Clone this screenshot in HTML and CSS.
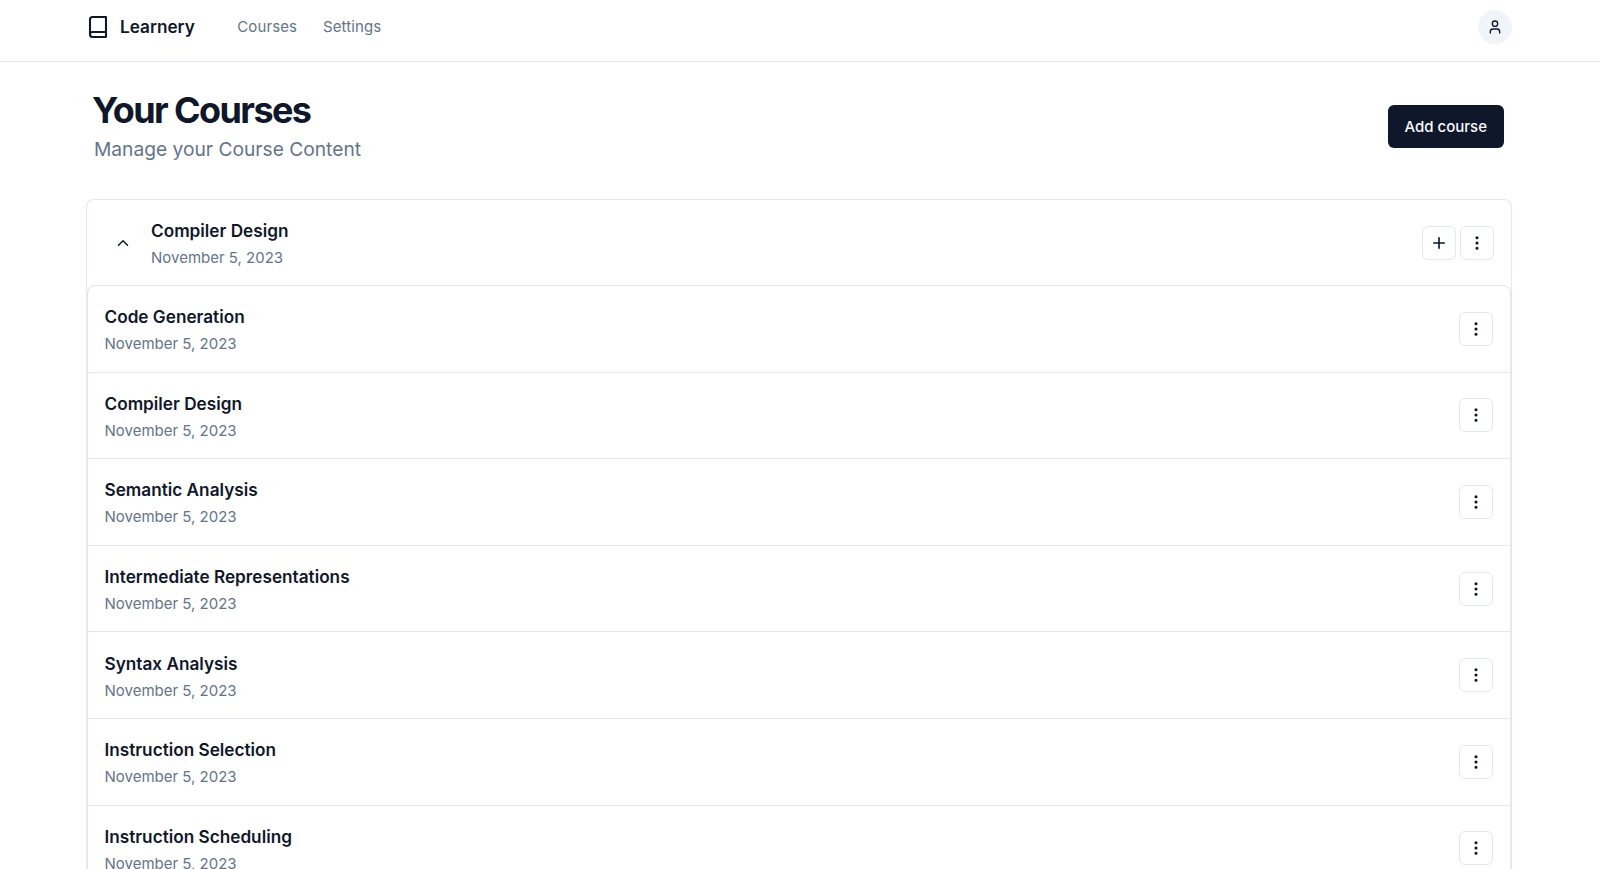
FILE: index.html
```html
<!DOCTYPE html>
<html lang="en">
<head>
<meta charset="UTF-8">
<meta name="viewport" content="width=device-width, initial-scale=1.0">
<title>Learnery</title>
<link rel="stylesheet" href="styles.css">
</head>
<body>
<header class="navbar">
    <div class="navbar-inner">
        <a class="brand" href="#">
            <svg class="brand-icon" viewBox="0 0 24 24" fill="none" stroke="currentColor" stroke-width="2" stroke-linecap="round" stroke-linejoin="round"><path d="M4 19.5v-15A2.5 2.5 0 0 1 6.500 2H20v20H6.500a2.500 2.500 0 0 1 0-5H20"/></svg>
            <span>Learnery</span>
        </a>
        <nav class="nav-links">
            <a href="#">Courses</a>
            <a href="#">Settings</a>
        </nav>
        <button class="avatar" type="button">
            <svg viewBox="0 0 24 24" fill="none" stroke="currentColor" stroke-width="2" stroke-linecap="round" stroke-linejoin="round"><path d="M19 21v-2a4 4 0 0 0-4-4H9a4 4 0 0 0-4 4v2"/><circle cx="12" cy="7" r="4"/></svg>
        </button>
    </div>
</header>

<main class="container">
    <div class="page-head">
        <div>
            <h1>Your Courses</h1>
            <p class="subtitle">Manage your Course Content</p>
        </div>
        <button class="add-btn" type="button">Add course</button>
    </div>

    <section class="course-card">
        <div class="course-head">
            <svg class="chevron" viewBox="0 0 24 24" fill="none" stroke="currentColor" stroke-width="2" stroke-linecap="round" stroke-linejoin="round"><path d="m18 15-6-6-6 6"/></svg>
            <div class="item-text">
                <div class="item-title">Compiler Design</div>
                <div class="item-date">November 5, 2023</div>
            </div>
            <div class="course-actions">
                <button class="icon-btn" type="button">
                    <svg viewBox="0 0 24 24" fill="none" stroke="currentColor" stroke-width="2" stroke-linecap="round" stroke-linejoin="round"><path d="M5 12h14"/><path d="M12 5v14"/></svg>
                </button>
                <button class="icon-btn" type="button">
                    <svg viewBox="0 0 24 24" fill="none" stroke="currentColor" stroke-width="2" stroke-linecap="round" stroke-linejoin="round"><circle cx="12" cy="12" r="1"/><circle cx="12" cy="5" r="1"/><circle cx="12" cy="19" r="1"/></svg>
                </button>
            </div>
        </div>
        <ul class="lesson-list" id="lesson-list"></ul>
    </section>
</main>

<script>
    const lessons = ['Code Generation', 'Compiler Design', 'Semantic Analysis', 'Intermediate Representations', 'Syntax Analysis', 'Instruction Selection', 'Instruction Scheduling'];
    const list = document.getElementById('lesson-list');
    lessons.forEach(name => {
        const row = document.createElement('li');
        row.className = 'lesson-row';
        row.innerHTML = `
            <div class="item-text">
                <div class="item-title">${name}</div>
                <div class="item-date">November 5, 2023</div>
            </div>
            <button class="icon-btn" type="button">
                <svg viewBox="0 0 24 24" fill="none" stroke="currentColor" stroke-width="2" stroke-linecap="round" stroke-linejoin="round"><circle cx="12" cy="12" r="1"/><circle cx="12" cy="5" r="1"/><circle cx="12" cy="19" r="1"/></svg>
            </button>`;
        list.appendChild(row);
    });
</script>
</body>
</html>
```

FILE: styles.css
```css
* {
    box-sizing: border-box;
}

html, body {
    height: 100%;
}

body {
    margin: 0;
    background-color: #fff;
    color: #0f172a;
    font-family: Inter, "Liberation Sans", sans-serif;
    overflow: hidden;
}

a {
    color: inherit;
    text-decoration: none;
}

button {
    font-family: inherit;
    cursor: pointer;
}

.navbar {
    height: 62px;
    padding-bottom: 8px;
    border-bottom: 1px solid #e2e8f0;
}

.navbar-inner {
    display: flex;
    align-items: center;
    height: 100%;
    padding: 0 88px 0 86px;
}

.brand {
    display: flex;
    align-items: center;
    gap: 10px;
    font-size: 17.2px;
    font-weight: 600;
}

.brand-icon {
    width: 24px;
    height: 24px;
    stroke-width: 2.1;
}

.nav-links {
    display: flex;
    gap: 26px;
    margin-left: 42.500px;
    font-size: 15px;
    letter-spacing: 0.1px;
    color: #64748b;
}

.avatar {
    display: flex;
    align-items: center;
    justify-content: center;
    width: 34px;
    height: 34px;
    margin-left: auto;
    padding: 0;
    border: none;
    border-radius: 50%;
    background-color: #f1f5f9;
    color: #0f172a;
}

.avatar svg {
    width: 16px;
    height: 16px;
}

.container {
    padding: 0 88px 0 86px;
}

.page-head {
    display: flex;
    align-items: center;
    justify-content: space-between;
    height: 137px;
    padding: 0 8px 9px 8px;
}

h1 {
    margin: 0 0 0 -2px;
    font-size: 36px;
    line-height: 40px;
    font-weight: 700;
    letter-spacing: -1.6px;
}

.subtitle {
    margin: 5px 0 0;
    font-size: 19.2px;
    line-height: 28px;
    color: #64748b;
}

.add-btn {
    height: 43px;
    padding: 0 17px;
    border: none;
    border-radius: 6px;
    background-color: #0f172a;
    color: #f8fafc;
    font-size: 15px;
    font-weight: 500;
}

.course-card {
    border: 1px solid #e2e8f0;
    border-bottom: none;
    border-radius: 8px 8px 0 0;
}

.course-head {
    display: flex;
    align-items: center;
    height: 85px;
    padding: 0 17px 0 27px;
}

.chevron {
    width: 18px;
    height: 18px;
    margin-right: 19px;
}

.course-actions {
    display: flex;
    gap: 4px;
    margin-left: auto;
}

.item-text {
    padding-top: 2px;
}

.item-title {
    font-size: 17.2px;
    line-height: 28px;
    font-weight: 600;
}

.item-date {
    font-size: 15px;
    line-height: 24px;
    margin-top: 1px;
    color: #64748b;
}

.icon-btn {
    display: flex;
    align-items: center;
    justify-content: center;
    width: 34px;
    height: 34px;
    padding: 0;
    border: 1px solid #e2e8f0;
    border-radius: 6px;
    background-color: #fff;
    color: #0f172a;
}

.icon-btn svg {
    width: 18px;
    height: 18px;
    stroke-width: 2.2;
}

.lesson-list {
    margin: 0;
    padding: 0;
    list-style: none;
    border-top: 1px solid #e2e8f0;
    border-radius: 8px 8px 0 0;
    box-shadow: inset 1px 0 0 #e2e8f0, inset -1px 0 0 #e2e8f0;
}

.lesson-row {
    display: flex;
    align-items: center;
    justify-content: space-between;
    height: 86.6px;
    padding: 0 18px 0 17.500px;
    border-bottom: 1px solid #e2e8f0;
}
```
